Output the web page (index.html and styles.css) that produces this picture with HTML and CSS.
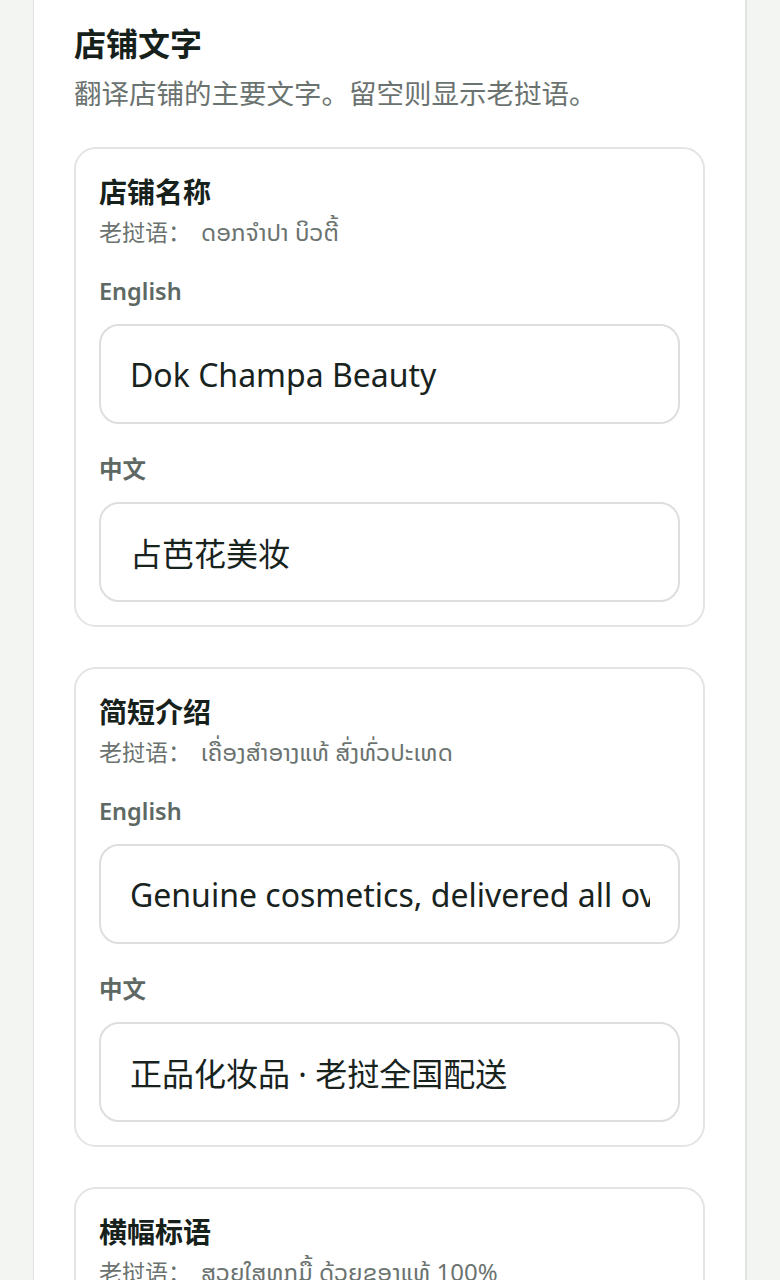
FILE: index.html
```html
<!DOCTYPE html>
<html lang="zh-CN">
<head>
<meta charset="utf-8">
<title>店铺文字</title>
<link rel="stylesheet" href="styles.css">
</head>
<body>
<div class="page">
  <section class="panel">
    <h2 class="panel-title">店铺文字</h2>
    <p class="panel-desc">翻译店铺的主要文字。留空则显示老挝语。</p>

    <div class="card">
      <h3 class="card-title">店铺名称</h3>
      <p class="card-sub">老挝语：<span class="lao">ດອກຈຳປາ ບິວຕີ້</span></p>
      <div class="field field-first">
        <label class="field-label">English</label>
        <input class="field-input" type="text" value="Dok Champa Beauty">
      </div>
      <div class="field">
        <label class="field-label">中文</label>
        <input class="field-input" type="text" value="占芭花美妆">
      </div>
    </div>

    <div class="card">
      <h3 class="card-title">简短介绍</h3>
      <p class="card-sub">老挝语：<span class="lao">ເຄື່ອງສຳອາງແທ້ ສົ່ງທົ່ວປະເທດ</span></p>
      <div class="field field-first">
        <label class="field-label">English</label>
        <input class="field-input" type="text" value="Genuine cosmetics, delivered all over Laos">
      </div>
      <div class="field">
        <label class="field-label">中文</label>
        <input class="field-input" type="text" value="正品化妆品 · 老挝全国配送">
      </div>
    </div>

    <div class="card">
      <h3 class="card-title">横幅标语</h3>
      <p class="card-sub">老挝语：<span class="lao">ສວຍໃສທຸກມື້ ດ້ວຍຂອງແທ້ 100%</span></p>
      <div class="field field-first">
        <label class="field-label">English</label>
        <input class="field-input" type="text" value="Beautiful every day with 100% genuine products">
      </div>
      <div class="field">
        <label class="field-label">中文</label>
        <input class="field-input" type="text" value="每天美丽 · 100%正品">
      </div>
    </div>
  </section>
</div>
</body>
</html>
```

FILE: styles.css
```css
* {
  box-sizing: border-box;
}

html, body {
  margin: 0;
  padding: 0;
  background: #f3f5f3;
}

body {
  font-family: "Noto Sans", "Noto Sans CJK SC", "Noto Sans Lao UI", "Noto Sans Lao", "DejaVu Sans", sans-serif;
  color: #17221c;
}

.page {
  padding: 0 33px;
}

.panel {
  background: #ffffff;
  border-left: 1.5px solid #e1e4e1;
  border-right: 2px solid #e1e4e1;
  padding: 22px 40px 40px 40px;
}

.panel-title {
  margin: 0;
  font-size: 32px;
  line-height: 44px;
  font-weight: 700;
  color: #16211b;
}

.panel-desc {
  margin: 8px 0 0 0;
  font-size: 27.5px;
  line-height: 40px;
  color: #6b7370;
}

.card {
  margin-top: 33px;
  border: 2px solid #e3e5e3;
  border-radius: 22px;
  padding: 24px 23px 23px 23px;
}

.card + .card {
  margin-top: 40px;
}

.card-title {
  margin: 0;
  font-size: 28px;
  line-height: 38px;
  font-weight: 700;
  color: #16211b;
}

.card-sub {
  margin: 4px 0 0 0;
  font-size: 23px;
  line-height: 34px;
  color: #6b7370;
}

.lao {
  margin-left: 10px;
  font-size: 24px;
}

.field {
  display: flex;
  flex-direction: column;
  gap: 16px;
  margin-top: 28px;
}

.field-first {
  margin-top: 25px;
}

.field-label {
  font-size: 23.5px;
  line-height: 34px;
  font-weight: 600;
  color: #5e6964;
}

.field-input {
  display: block;
  width: 100%;
  height: 100px;
  margin: 0;
  border: 2px solid #dcdfdc;
  border-radius: 20px;
  padding: 0 28px 0 29px;
  background: #ffffff;
  font-family: "Noto Sans", "Noto Sans CJK SC", sans-serif;
  font-size: 32px;
  color: #18231e;
  outline: none;
}
```
